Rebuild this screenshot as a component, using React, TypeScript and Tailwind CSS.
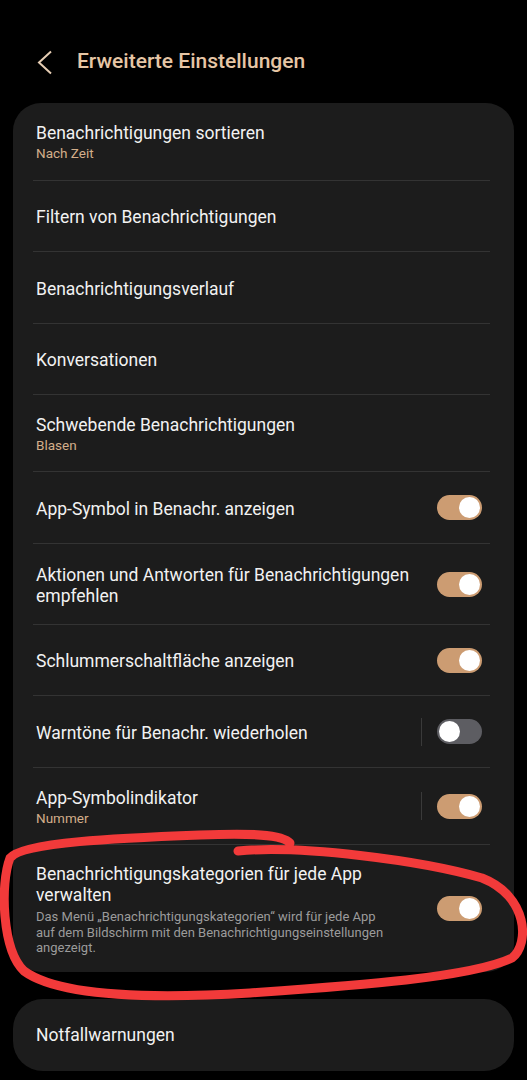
import React from 'react';

type Row = {
  title: React.ReactNode;
  sub?: string;
  desc?: React.ReactNode;
  toggle?: 'on' | 'off';
  divider?: boolean;
  h: string;
};

const rows: Row[] = [
  { title: 'Benachrichtigungen sortieren', sub: 'Nach Zeit', h: 'h-[77px]' },
  { title: 'Filtern von Benachrichtigungen', h: 'h-[70px]' },
  { title: 'Benachrichtigungsverlauf', h: 'h-[71px]' },
  { title: 'Konversationen', h: 'h-[70px]' },
  { title: 'Schwebende Benachrichtigungen', sub: 'Blasen', h: 'h-[76px]' },
  { title: 'App-Symbol in Benachr. anzeigen', toggle: 'on', h: 'h-[71px]' },
  {
    title: (
      <>
        Aktionen und Antworten für Benachrichtigungen
        <br />
        empfehlen
      </>
    ),
    toggle: 'on',
    h: 'h-[80px]',
  },
  { title: 'Schlummerschaltfläche anzeigen', toggle: 'on', h: 'h-[70px]' },
  { title: 'Warntöne für Benachr. wiederholen', toggle: 'off', divider: true, h: 'h-[71px]' },
  { title: 'App-Symbolindikator', sub: 'Nummer', toggle: 'on', divider: true, h: 'h-[76px]' },
];

const Toggle: React.FC<{ on: boolean }> = ({ on }) => (
  <div
    className={`w-[45px] h-[25px] rounded-full flex items-center px-[2px] shrink-0 ${
      on ? 'bg-[#cc9c72] justify-end' : 'bg-[#5d5d62] justify-start'
    }`}
  >
    <div className="w-[21px] h-[21px] rounded-full bg-white" />
  </div>
);

const SettingRow: React.FC<{ row: Row }> = ({ row }) => (
  <div className={`${row.h} flex items-center pl-[23px] pr-[32px]`}>
    <div className="flex-1 min-w-0 pt-[3px]">
      <div className="text-[17.5px] leading-[21px] text-[#f2f2f2] whitespace-nowrap">{row.title}</div>
      {row.sub && <div className="text-[13.5px] leading-[19px] text-[#d3ae8a]">{row.sub}</div>}
      {row.desc && <div className="text-[13px] leading-[15.5px] text-[#9b9b9b] mt-[3px] whitespace-nowrap">{row.desc}</div>}
    </div>
    {row.divider && <div className="w-px h-[28px] bg-[#3a3a3a] mr-[15px]" />}
    {row.toggle && <Toggle on={row.toggle === 'on'} />}
  </div>
);

export default function App() {
  return (
    <div
      className="relative w-[527px] h-[1080px] bg-black overflow-hidden"
      style={{ fontFamily: 'Roboto, "Noto Sans", sans-serif' }}
    >
      <div className="h-[103px] flex items-center pl-[37px] pt-[21px]">
        <svg width="16" height="25" viewBox="0 0 16 25">
          <path d="M14 1.5 L2 12.5 L14 23.5" fill="none" stroke="#e6cdb3" strokeWidth="2" strokeLinejoin="miter" />
        </svg>
        <h1 className="ml-[24px] text-[21px] font-medium text-[#e6c6a5]">Erweiterte Einstellungen</h1>
      </div>

      <div className="mx-[13px] rounded-[28px] bg-[#1c1c1c]">
        {rows.map((row, i) => (
          <div key={i}>
            <SettingRow row={row} />
            <div className="ml-[20px] mr-[24px] h-px bg-[#333333]" />
          </div>
        ))}
        <SettingRow
          row={{
            title: (
              <>
                Benachrichtigungskategorien für jede App
                <br />
                verwalten
              </>
            ),
            desc: (
              <>
                Das Menü „Benachrichtigungskategorien“ wird für jede App
                <br />
                auf dem Bildschirm mit den Benachrichtigungseinstellungen
                <br />
                angezeigt.
              </>
            ),
            toggle: 'on',
            h: 'h-[127px]',
          }}
        />
      </div>

      <div className="mx-[13px] mt-[27px] h-[72px] rounded-[30px] bg-[#1c1c1c] flex items-center pl-[23px]">
        <span className="text-[17.5px] text-[#f2f2f2]">Notfallwarnungen</span>
      </div>

      <svg className="absolute left-0 top-0 pointer-events-none" width="527" height="1080" viewBox="0 0 527 1080">
        <path
          d="M238 851 C300 845 420 860 482 878 C528 896 530 944 512 958 C470 978 350 986 250 993 C150 999 58 996 24 971 C2 950 0 884 10 858 C22 842 120 838 200 835 C250 833 282 834 290 843"
          fill="none"
          stroke="#f23a3a"
          strokeWidth="9"
          strokeLinecap="round"
          strokeLinejoin="round"
        />
      </svg>
    </div>
  );
}
